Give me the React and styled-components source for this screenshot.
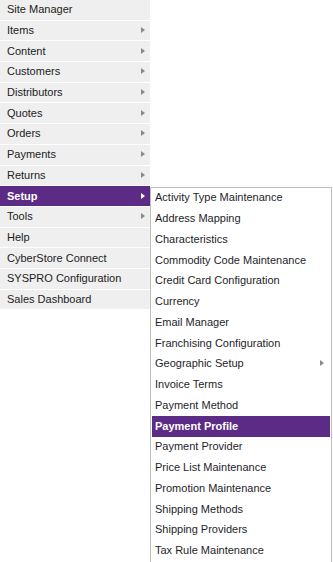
import React from "react";
import styled, { createGlobalStyle } from "styled-components";

const GlobalStyle = createGlobalStyle`
  html, body {
    margin: 0;
    padding: 0;
    background: #ffffff;
  }
  body {
    font-family: "Liberation Sans", Arial, sans-serif;
  }
`;

const mainItems = [
  { label: "Site Manager" },
  { label: "Items", sub: true },
  { label: "Content", sub: true },
  { label: "Customers", sub: true },
  { label: "Distributors", sub: true },
  { label: "Quotes", sub: true },
  { label: "Orders", sub: true },
  { label: "Payments", sub: true },
  { label: "Returns", sub: true },
  { label: "Setup", sub: true, open: true },
  { label: "Tools", sub: true },
  { label: "Help" },
  { label: "CyberStore Connect" },
  { label: "SYSPRO Configuration" },
  { label: "Sales Dashboard" },
];

const setupItems = [
  { label: "Activity Type Maintenance" },
  { label: "Address Mapping" },
  { label: "Characteristics" },
  { label: "Commodity Code Maintenance" },
  { label: "Credit Card Configuration" },
  { label: "Currency" },
  { label: "Email Manager" },
  { label: "Franchising Configuration" },
  { label: "Geographic Setup", sub: true },
  { label: "Invoice Terms" },
  { label: "Payment Method" },
  { label: "Payment Profile", active: true },
  { label: "Payment Provider" },
  { label: "Price List Maintenance" },
  { label: "Promotion Maintenance" },
  { label: "Shipping Methods" },
  { label: "Shipping Providers" },
  { label: "Tax Rule Maintenance" },
];

const Page = styled.div`
  display: flex;
  align-items: flex-start;
  width: 333px;
  height: 562px;
  overflow: hidden;
`;

const MainMenu = styled.ul`
  list-style: none;
  margin: 0;
  padding: 0;
  width: 150px;
`;

const MenuRow = styled.li`
  display: flex;
  align-items: center;
  justify-content: space-between;
  box-sizing: border-box;
  height: 20.7px;
  padding: 0 5px 1px 7px;
  border-bottom: 1px solid #ffffff;
  font-size: 11px;
  background: ${({ $open }) => ($open ? "#5c2b85" : "#efefef")};
  color: ${({ $open }) => ($open ? "#ffffff" : "#222222")};
  font-weight: ${({ $open }) => ($open ? "bold" : "normal")};
  white-space: nowrap;
`;

const Arrow = styled.span`
  width: 0;
  height: 0;
  border-top: 3px solid transparent;
  border-bottom: 3px solid transparent;
  border-left: 4px solid ${({ $light }) => ($light ? "#ffffff" : "#8a8a8a")};
`;

const SubMenu = styled.ul`
  list-style: none;
  margin: 187px 0 0 0;
  padding: 0 1px 1px 1px;
  width: 182px;
  box-sizing: border-box;
  background: #ffffff;
  border: 1px solid #bdbdbd;
`;

const SubRow = styled.li`
  display: flex;
  align-items: center;
  justify-content: space-between;
  box-sizing: border-box;
  height: 20.76px;
  padding: 0 6px 2px 3px;
  font-size: 11px;
  white-space: nowrap;
  background: ${({ $active }) => ($active ? "#5c2b85" : "transparent")};
  color: ${({ $active }) => ($active ? "#ffffff" : "#1e1e2a")};
  font-weight: ${({ $active }) => ($active ? "bold" : "normal")};
`;

export default function App() {
  return (
    <>
      <GlobalStyle />
      <Page>
        <MainMenu>
          {mainItems.map((item) => (
            <MenuRow key={item.label} $open={item.open}>
              <span>{item.label}</span>
              {item.sub && <Arrow $light={item.open} />}
            </MenuRow>
          ))}
        </MainMenu>
        <SubMenu>
          {setupItems.map((item) => (
            <SubRow key={item.label} $active={item.active}>
              <span>{item.label}</span>
              {item.sub && <Arrow />}
            </SubRow>
          ))}
        </SubMenu>
      </Page>
    </>
  );
}
